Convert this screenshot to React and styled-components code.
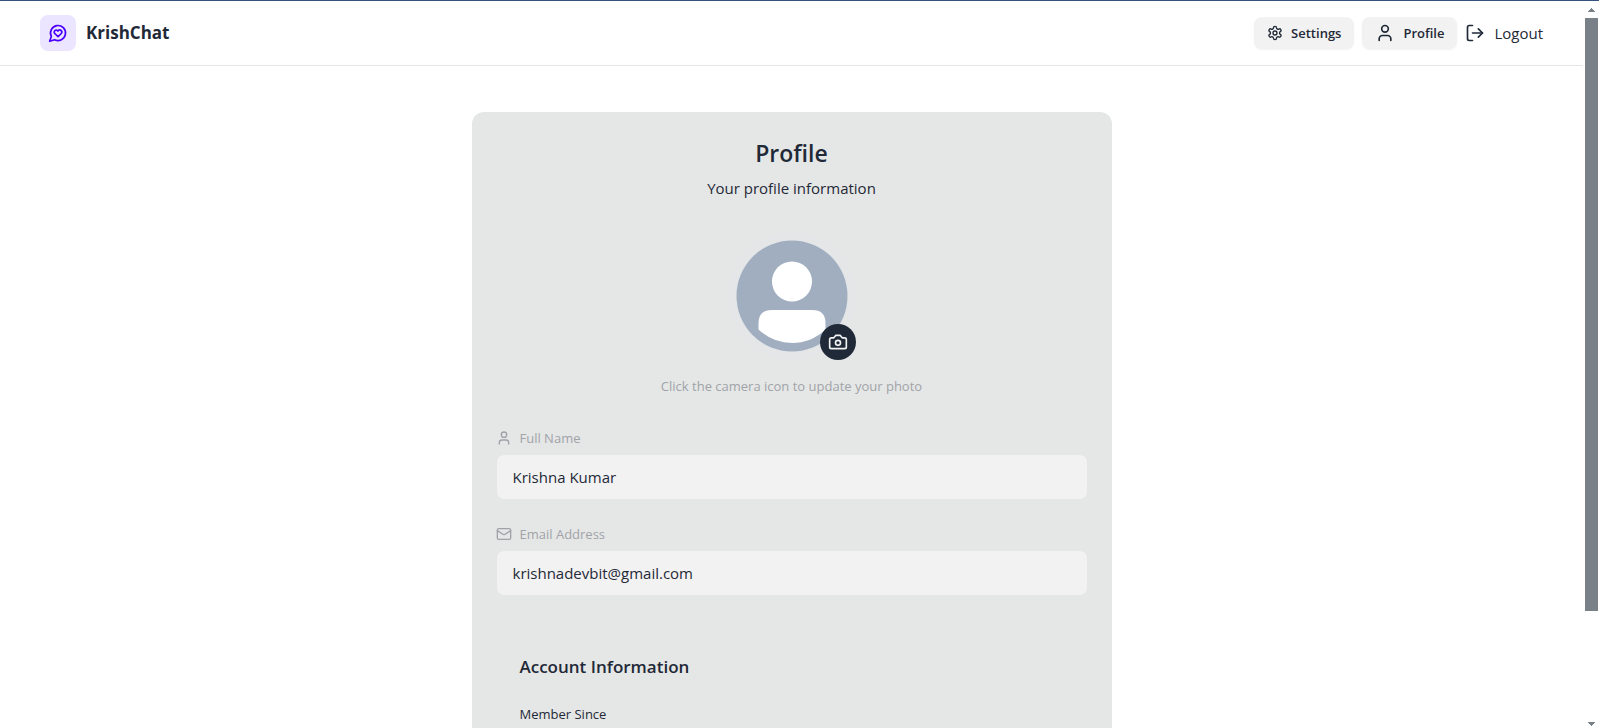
import React from "react";
import styled, { createGlobalStyle } from "styled-components";

const GlobalStyle = createGlobalStyle`
  *, *::before, *::after { box-sizing: border-box; }
  body {
    margin: 0;
    background: #ffffff;
    color: #1f2937;
    font-family: "Segoe UI", "Open Sans", sans-serif;
    font-size: 15px;
    line-height: 24px;
  }
  h1, h2, p { margin: 0; }
  button, input { font: inherit; color: inherit; }
`;

const Shell = styled.div`
  display: flex;
  height: 100vh;
  overflow: hidden;
  border-top: 1px solid #34527a;
`;

const Page = styled.div`
  flex: 1;
  min-width: 0;
  overflow: hidden;
`;

const Header = styled.header`
  display: flex;
  align-items: center;
  justify-content: space-between;
  height: 65px;
  padding: 0 40px;
  border-bottom: 1px solid #e5e6e6;
`;

const Brand = styled.a`
  display: flex;
  align-items: center;
  gap: 10px;
  color: inherit;
  text-decoration: none;
`;

const BrandMark = styled.span`
  display: grid;
  place-items: center;
  width: 36px;
  height: 36px;
  border-radius: 8px;
  background: #ebe5ff;
  color: #4a00ff;
`;

const BrandName = styled.span`
  font-size: 17px;
  font-weight: 700;
`;

const Nav = styled.nav`
  display: flex;
  align-items: center;
  gap: 8px;
`;

const NavButton = styled.a`
  display: flex;
  align-items: center;
  gap: 8px;
  height: 32px;
  padding: 0 13px;
  border-radius: 8px;
  background: #f2f2f2;
  box-shadow: 0 1px 2px rgba(0, 0, 0, 0.05);
  color: inherit;
  font-size: 13px;
  font-weight: 600;
  text-decoration: none;
`;

const LogoutButton = styled.button`
  display: flex;
  align-items: center;
  gap: 9px;
  padding: 0;
  border: 0;
  background: none;
  cursor: pointer;
`;

const Main = styled.main`
  padding: 46px 16px 0;
`;

const Card = styled.section`
  display: flex;
  flex-direction: column;
  gap: 32px;
  max-width: 640px;
  min-height: 100vh;
  margin: 0 auto;
  padding: 24px;
  border-radius: 12px;
  background: #e5e7e6;
`;

const CardHeader = styled.div`
  display: flex;
  flex-direction: column;
  gap: 6px;
  text-align: center;
`;

const Title = styled.h1`
  font-size: 23px;
  font-weight: 600;
  line-height: 34px;
`;

const AvatarBlock = styled.div`
  display: flex;
  flex-direction: column;
  align-items: center;
  gap: 16px;
`;

const AvatarFrame = styled.div`
  position: relative;
  width: 128px;
  height: 128px;
  padding: 8px;
  border-radius: 50%;
  background: #e5e6e8;

  > svg { display: block; }
`;

const CameraButton = styled.button`
  position: absolute;
  right: 0;
  bottom: 0;
  display: grid;
  place-items: center;
  width: 36px;
  height: 36px;
  padding: 0;
  border: 0;
  border-radius: 50%;
  background: #1f2937;
  color: #f2f2f2;
  cursor: pointer;
`;

const Hint = styled.p`
  color: #a1a3a9;
  font-size: 13px;
  font-weight: 500;
  line-height: 20px;
`;

const Fields = styled.div`
  display: flex;
  flex-direction: column;
  gap: 24px;
`;

const Field = styled.div`
  display: flex;
  flex-direction: column;
  gap: 6px;
`;

const FieldLabel = styled.label`
  display: flex;
  align-items: center;
  gap: 8px;
  color: #a1a3a9;
  font-size: 13px;
  font-weight: 500;
  line-height: 20px;
`;

const FieldInput = styled.input`
  width: 100%;
  height: 46px;
  padding: 0 16px;
  border: 1px solid #e5e6e8;
  border-radius: 8px;
  background: #f2f2f2;
  outline: none;
`;

const Account = styled.section`
  padding: 24px;
`;

const AccountTitle = styled.h2`
  margin-bottom: 14px;
  font-size: 17px;
  font-weight: 600;
  line-height: 30px;
`;

const AccountRow = styled.div`
  padding: 8px 0;
  font-size: 13px;
  line-height: 20px;
`;

const ScrollTrack = styled.div`
  display: flex;
  flex-direction: column;
  align-items: center;
  flex: none;
  width: 16px;
  padding: 7px 1px 2px 2px;
  color: #7a8088;
`;

const ScrollSpace = styled.div`
  flex: 1;
  align-self: stretch;
  margin: 6px 0;
`;

const ScrollThumb = styled.div`
  height: 85%;
  background: #7a8088;
`;

const Icon = ({ size, children }) => (
  <svg
    width={size}
    height={size}
    viewBox="0 0 24 24"
    fill="none"
    stroke="currentColor"
    strokeWidth="2"
    strokeLinecap="round"
    strokeLinejoin="round"
    aria-hidden="true"
  >
    {children}
  </svg>
);

const HeartBubble = ({ size }) => (
  <Icon size={size}>
    <path d="M7.9 20A9 9 0 1 0 4 16.1L2 22Z" />
    <path d="M15.8 9.2a2.5 2.5 0 0 0-3.5 0l-.3.4-.35-.3a2.42 2.42 0 1 0-3.2 3.6l3.6 3.5 3.6-3.5c1.2-1.2 1.1-2.7.2-3.7" />
  </Icon>
);

const Gear = ({ size }) => (
  <Icon size={size}>
    <path d="M12.22 2h-.44a2 2 0 0 0-2 2v.18a2 2 0 0 1-1 1.73l-.43.25a2 2 0 0 1-2 0l-.15-.08a2 2 0 0 0-2.73.73l-.22.38a2 2 0 0 0 .73 2.73l.15.1a2 2 0 0 1 1 1.72v.51a2 2 0 0 1-1 1.74l-.15.09a2 2 0 0 0-.73 2.73l.22.38a2 2 0 0 0 2.73.73l.15-.08a2 2 0 0 1 2 0l.43.25a2 2 0 0 1 1 1.73V20a2 2 0 0 0 2 2h.44a2 2 0 0 0 2-2v-.18a2 2 0 0 1 1-1.73l.43-.25a2 2 0 0 1 2 0l.15.08a2 2 0 0 0 2.73-.73l.22-.39a2 2 0 0 0-.73-2.73l-.15-.08a2 2 0 0 1-1-1.74v-.5a2 2 0 0 1 1-1.74l.15-.09a2 2 0 0 0 .73-2.73l-.22-.38a2 2 0 0 0-2.73-.73l-.15.08a2 2 0 0 1-2 0l-.43-.25a2 2 0 0 1-1-1.73V4a2 2 0 0 0-2-2z" />
    <circle cx="12" cy="12" r="3" />
  </Icon>
);

const Person = ({ size }) => (
  <Icon size={size}>
    <path d="M19 21v-2a4 4 0 0 0-4-4H9a4 4 0 0 0-4 4v2" />
    <circle cx="12" cy="7" r="4" />
  </Icon>
);

const Exit = ({ size }) => (
  <Icon size={size}>
    <path d="M9 21H5a2 2 0 0 1-2-2V5a2 2 0 0 1 2-2h4" />
    <polyline points="16 17 21 12 16 7" />
    <line x1="21" x2="9" y1="12" y2="12" />
  </Icon>
);

const Envelope = ({ size }) => (
  <Icon size={size}>
    <rect width="20" height="16" x="2" y="4" rx="2" />
    <path d="m22 7-8.97 5.7a1.94 1.94 0 0 1-2.06 0L2 7" />
  </Icon>
);

const Camera = ({ size }) => (
  <Icon size={size}>
    <path d="M14.5 4h-5L7 7H4a2 2 0 0 0-2 2v9a2 2 0 0 0 2 2h16a2 2 0 0 0 2-2V9a2 2 0 0 0-2-2h-3l-2.5-3z" />
    <circle cx="12" cy="13" r="3" />
  </Icon>
);

const DefaultAvatar = () => (
  <svg width="112" height="112" viewBox="0 0 112 112" role="img" aria-label="Profile">
    <circle cx="56" cy="56" r="55.5" fill="#a0aec0" />
    <circle cx="56" cy="41.5" r="20" fill="#ffffff" />
    <path
      d="M22.5 83V89.5Q37 103 56 103T89.5 89.5V83Q89.500 70 76 70H36Q22.500 70 22.500 83Z"
      fill="#ffffff"
    />
  </svg>
);

const Arrow = ({ down }) => (
  <svg width="7" height="4" viewBox="0 0 7 4" shapeRendering="crispEdges" aria-hidden="true">
    <path d={down ? "M0 0H7L4 4H3Z" : "M0 4H7L4 0H3Z"} fill="currentColor" />
  </svg>
);

const profileFields = [
  { id: "full-name", label: "Full Name", value: "Krishna Kumar", type: "text", Glyph: Person },
  { id: "email", label: "Email Address", value: "krishnadevbit@gmail.com", type: "email", Glyph: Envelope },
];

export default function App() {
  return (
    <>
      <GlobalStyle />
      <Shell>
        <Page>
          <Header>
            <Brand href="#home">
              <BrandMark><HeartBubble size={20} /></BrandMark>
              <BrandName>KrishChat</BrandName>
            </Brand>
            <Nav>
              <NavButton href="#settings"><Gear size={16} />Settings</NavButton>
              <NavButton href="#profile"><Person size={20} />Profile</NavButton>
              <LogoutButton type="button"><Exit size={20} />Logout</LogoutButton>
            </Nav>
          </Header>
          <Main>
            <Card>
              <CardHeader>
                <Title>Profile</Title>
                <p>Your profile information</p>
              </CardHeader>
              <AvatarBlock>
                <AvatarFrame>
                  <DefaultAvatar />
                  <CameraButton type="button" aria-label="Update photo"><Camera size={20} /></CameraButton>
                </AvatarFrame>
                <Hint>Click the camera icon to update your photo</Hint>
              </AvatarBlock>
              <Fields>
                {profileFields.map(({ id, label, value, type, Glyph }) => (
                  <Field key={id}>
                    <FieldLabel htmlFor={id}><Glyph size={16} />{label}</FieldLabel>
                    <FieldInput id={id} type={type} value={value} readOnly />
                  </Field>
                ))}
              </Fields>
              <Account>
                <AccountTitle>Account Information</AccountTitle>
                <AccountRow>Member Since</AccountRow>
              </Account>
            </Card>
          </Main>
        </Page>
        <ScrollTrack aria-hidden="true">
          <Arrow />
          <ScrollSpace><ScrollThumb /></ScrollSpace>
          <Arrow down />
        </ScrollTrack>
      </Shell>
    </>
  );
}
